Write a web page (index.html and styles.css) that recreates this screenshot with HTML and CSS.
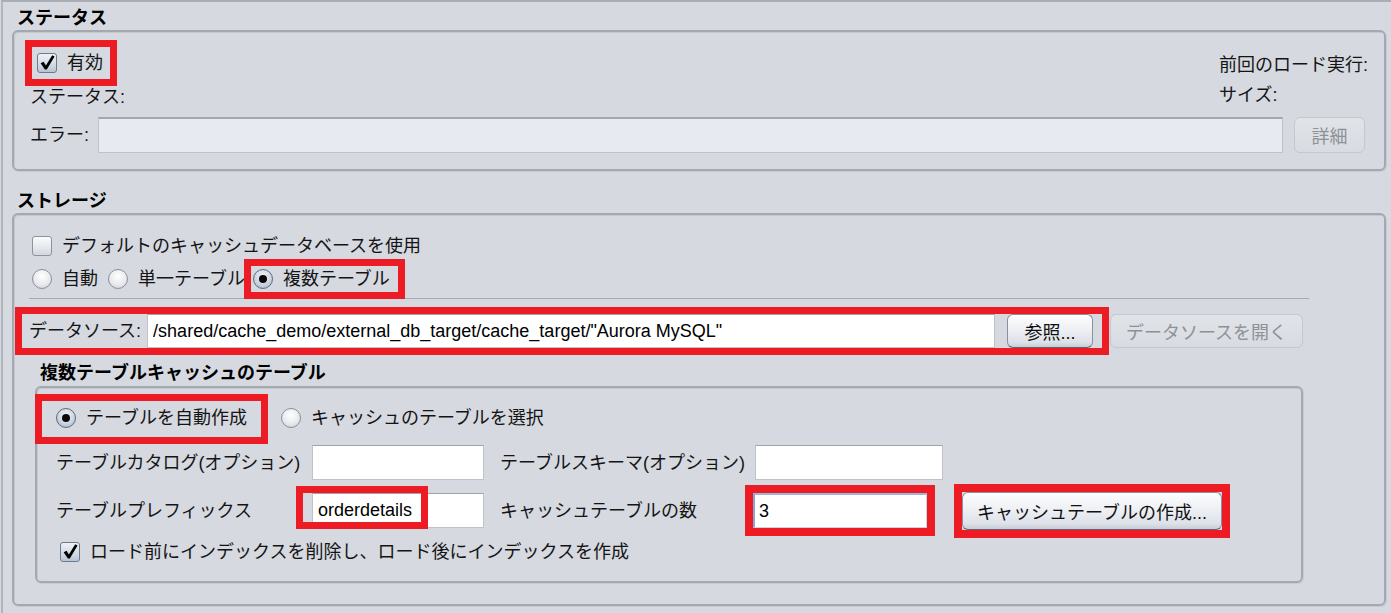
FILE: index.html
```html
<!DOCTYPE html>
<html lang="ja">
<head>
  <meta charset="UTF-8">
  <title>キャッシュ設定</title>
  <link rel="stylesheet" href="styles.css">
</head>
<body>
  <div class="window">

    <h2 class="group-title">ステータス</h2>
    <div class="panel status-panel">
      <div class="status-top">
        <div class="status-left">
          <label class="check hl hl-enable"><span class="box checked"><svg viewBox="0 0 18 18"><path d="M2.6 9.2 L5.6 7.8 L7.9 11.6 L14.2 1.2 L16.6 2.6 L8.8 15.6 L6.9 15.6 Z"/></svg></span>有効</label>
          <div class="status-line">ステータス:</div>
        </div>
        <div class="status-right">
          <div>前回のロード実行:</div>
          <div>サイズ:</div>
        </div>
      </div>
      <div class="error-row">
        <span class="error-label">エラー:</span>
        <div class="field field-disabled"></div>
        <button class="btn btn-detail" disabled>詳細</button>
      </div>
    </div>

    <h2 class="group-title storage-title">ストレージ</h2>
    <div class="panel storage-panel">
      <label class="check"><span class="box"></span>デフォルトのキャッシュデータベースを使用</label>

      <div class="radio-row">
        <label class="radio"><span class="dot"></span>自動</label>
        <label class="radio"><span class="dot"></span>単一テーブル</label>
        <label class="radio hl hl-multi"><span class="dot on"></span>複数テーブル</label>
      </div>

      <div class="separator"></div>

      <div class="ds-row">
        <div class="ds-main hl">
          <span class="ds-label">データソース:</span>
          <input class="field ds-field" type="text" value="/shared/cache_demo/external_db_target/cache_target/&quot;Aurora MySQL&quot;">
          <button class="btn btn-browse">参照...</button>
        </div>
        <button class="btn btn-open" disabled>データソースを開く</button>
      </div>

      <h3 class="sub-title">複数テーブルキャッシュのテーブル</h3>
      <div class="panel sub-panel">
        <div class="radio-row inner-radios">
          <label class="radio hl hl-auto"><span class="dot on"></span>テーブルを自動作成</label>
          <label class="radio pick"><span class="dot"></span>キャッシュのテーブルを選択</label>
        </div>

        <div class="form-row catalog-row">
          <span class="col-label">テーブルカタログ(オプション)</span>
          <input class="field w-172" type="text">
          <span class="col-label2 w-255">テーブルスキーマ(オプション)</span>
          <input class="field w-188" type="text">
        </div>

        <div class="form-row prefix-row">
          <span class="col-label">テーブルプレフィックス</span>
          <span class="mark-prefix"><input class="field w-172" type="text" value="orderdetails"></span>
          <span class="col-label2 w-253">キャッシュテーブルの数</span>
          <input class="field w-174 focus hl-count" type="text" value="3">
          <span class="hl-create"><button class="btn btn-create">キャッシュテーブルの作成...</button></span>
        </div>

        <label class="check last-check"><span class="box checked"><svg viewBox="0 0 18 18"><path d="M2.6 9.2 L5.6 7.8 L7.9 11.6 L14.2 1.2 L16.6 2.6 L8.8 15.6 L6.9 15.6 Z"/></svg></span>ロード前にインデックスを削除し、ロード後にインデックスを作成</label>
      </div>
    </div>

  </div>
</body>
</html>
```

FILE: styles.css
```css
/* Swing (Nimbus) style settings page */
body {
  margin: 0;
  background-color: #d6d9df;
  font-family: "Liberation Sans", "Noto Sans CJK JP", sans-serif;
  font-size: 18px;
  line-height: 26px;
  color: #141414;
}

.window {
  height: 613px;
  box-sizing: border-box;
  margin-left: 1px;
  padding: 6px 5px 0 9px;
  border-top: 2px solid #a9aeb5;
  border-left: 2px solid #b0b4bb;
}

.group-title {
  margin: 0 0 2px 5px;
  font-size: 18px;
  line-height: 20px;
  font-weight: bold;
  color: #000;
}

.storage-title {
  margin-top: 20px;
}

.panel {
  border: 2px solid #a4a9b1;
  border-radius: 6px;
  box-shadow: inset 1px 1px 0 #c4c8ce, 1px 1px 0 #c8ccd2;
}

/* highlight boxes */
.hl {
  outline: 7px solid #ed1c24;
}

/* status */
.status-panel {
  padding: 18px 19px 16px 16px;
}

.status-top {
  display: flex;
  justify-content: space-between;
}

.status-line {
  margin-top: 8px;
}

.status-right {
  display: flex;
  flex-direction: column;
  gap: 4px;
  padding-top: 2px;
  margin-right: -3px;
}

.hl-enable {
  padding: 3px 7px 3px 5px;
  margin: -3px -7px -3px -3px;
}

.error-row {
  display: flex;
  align-items: center;
  margin-top: 7px;
}

.error-label {
  width: 68px;
  flex: none;
}

.field {
  height: 35px;
  box-sizing: border-box;
  background: #fff;
  border: 1px solid #bfc3c9;
  border-top-color: #9fa4ab;
  padding: 0 5px;
  font-family: "Liberation Sans", "Noto Sans CJK JP", sans-serif;
  font-size: 18px;
  color: #000;
  outline: none;
}

.field-disabled {
  flex: 1;
  height: 36px;
  background: #e7eaf1;
  border-top: 2px solid #a3a8b0;
}

.focus {
  border-color: #c6d4e6;
  border-left: 2px solid #86a8d6;
  border-top: 2px solid #9ab7de;
  padding-left: 4px;
}

/* buttons */
.btn {
  height: 34px;
  box-sizing: border-box;
  padding: 0 10px;
  border: 1px solid #8a919c;
  border-bottom-color: #5f6670;
  border-radius: 6px;
  background: linear-gradient(#fdfdfe, #eef0f4 45%, #dde1e8 85%, #c9ced6);
  font-family: "Liberation Sans", "Noto Sans CJK JP", sans-serif;
  font-size: 18px;
  color: #111;
  flex: none;
}

.btn:disabled {
  border-color: #c3c7ce;
  background: linear-gradient(#e0e3e8, #d8dbe1);
  color: #8e9197;
}

.btn-detail {
  width: 71px;
  height: 36px;
  margin-left: 11px;
}

/* checkboxes and radios */
.check {
  display: flex;
  align-items: center;
  width: fit-content;
  margin-left: 2px;
  white-space: nowrap;
}

.radio {
  display: flex;
  align-items: center;
  white-space: nowrap;
}

.box {
  width: 20px;
  height: 20px;
  box-sizing: border-box;
  margin-right: 10px;
  border: 1px solid #8d949e;
  border-radius: 3px;
  background: linear-gradient(#fcfcfd, #e4e7ec 60%, #d3d7de);
  flex: none;
}

.box.checked {
  background: linear-gradient(#eef2f7, #d2dae5 60%, #b8c4d3);
  border-color: #6f7b8c;
}

.box svg {
  display: block;
  width: 18px;
  height: 18px;
  fill: #000;
}

.dot {
  position: relative;
  width: 20px;
  height: 20px;
  box-sizing: border-box;
  margin-right: 10px;
  border: 1px solid #8a919b;
  border-radius: 50%;
  background: radial-gradient(circle at 50% 35%, #ffffff, #e8eaee 55%, #c8cdd5);
  flex: none;
}

.dot.on {
  border-color: #5f6b7c;
  background: radial-gradient(circle at 50% 35%, #f3f6fa, #cbd5e2 55%, #9fafc4);
}

.dot.on::after {
  content: "";
  position: absolute;
  left: 5px;
  top: 5px;
  width: 8px;
  height: 8px;
  border-radius: 50%;
  background: #0a0a0a;
}

/* storage */
.storage-panel {
  padding: 18px 81px 21px 16px;
}

.radio-row {
  display: flex;
  gap: 10px;
  margin-top: 7px;
  margin-left: 2px;
}

.hl-multi {
  padding: 0 8px 0 2px;
  margin: 0 -8px 0 -4px;
}

.separator {
  height: 1px;
  margin: 6px -6px 0 -1px;
  background: #a6abb2;
}

.ds-row {
  display: flex;
  align-items: center;
  margin-top: 15px;
}

.ds-main {
  flex: 1;
  display: flex;
  align-items: center;
  margin-left: -8px;
  padding: 0 9px 0 7px;
}

.ds-label {
  flex: none;
  margin-right: 6px;
}

.ds-field {
  flex: 1;
  min-width: 0;
  height: 34px;
}

.btn-browse {
  width: 86px;
  margin-left: 12px;
}

.btn-open {
  width: 193px;
  margin-left: 8px;
}

.sub-title {
  margin: 15px 0 3px 10px;
  font-size: 18px;
  line-height: 20px;
  font-weight: bold;
  color: #000;
}

.sub-panel {
  margin-left: 5px;
  padding: 17px 19px 16px 19px;
}

.inner-radios {
  margin: 0;
  gap: 0;
}

.hl-auto {
  padding: 4px 14px 6px 14px;
  margin: -4px -14px -6px -14px;
}

.pick {
  margin-left: 34px;
}

.form-row {
  display: flex;
  align-items: center;
  height: 35px;
}

.catalog-row {
  margin-top: 14px;
}

.prefix-row {
  margin-top: 13px;
}

.col-label {
  width: 256px;
  flex: none;
}

.col-label2 {
  margin-left: 16px;
  flex: none;
  white-space: nowrap;
}

.w-172 { width: 172px; }
.w-174 { width: 174px; }
.w-188 { width: 188px; }
.w-253 { width: 253px; }
.w-255 { width: 255px; }

.mark-prefix {
  position: relative;
  display: flex;
}

.mark-prefix::after {
  content: "";
  position: absolute;
  left: -16px;
  top: -7px;
  width: 118px;
  height: 29px;
  border: 7px solid #ed1c24;
}

.hl-count {
  outline: 8px solid #ed1c24;
}

.hl-create {
  display: flex;
  margin-left: 35px;
  outline: 8px solid #ed1c24;
}

.btn-create {
  width: 260px;
  height: 38px;
  padding: 0 8px;
}

.last-check {
  margin: 11px 0 0 4px;
}
```
